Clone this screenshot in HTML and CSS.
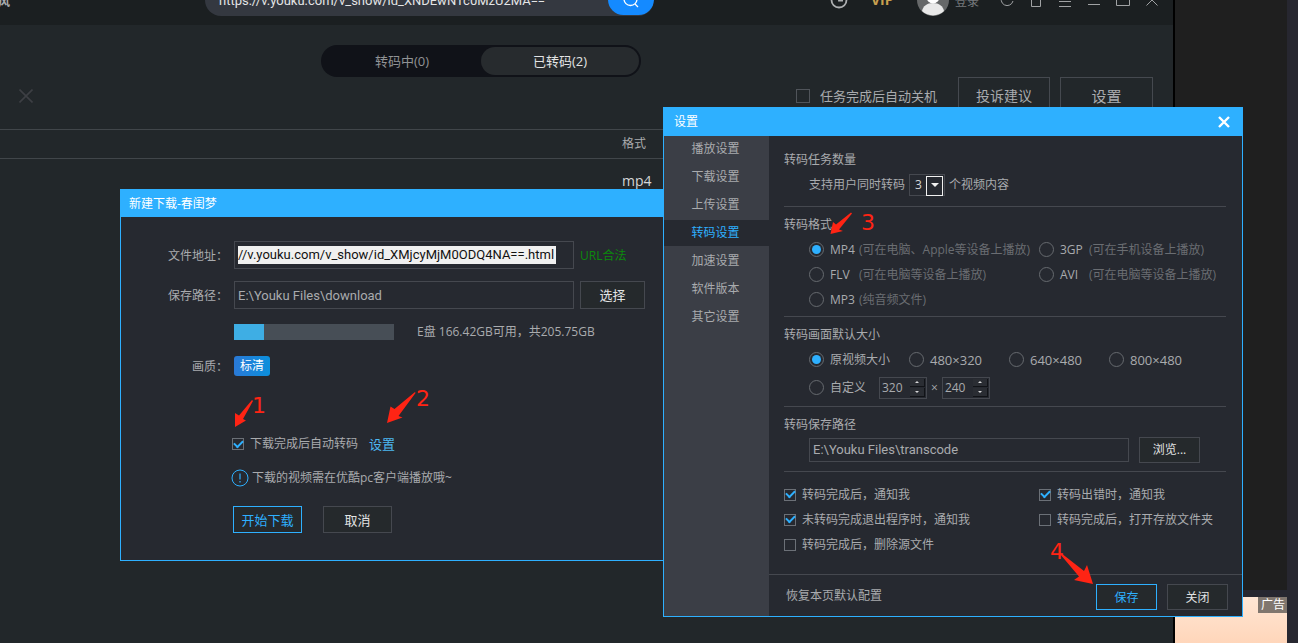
FILE: index.html
```html
<!DOCTYPE html>
<html lang="zh-CN">
<head>
<meta charset="utf-8">
<title>优酷</title>
<link rel="stylesheet" href="styles.css">
</head>
<body>
<div class="desktop">
  <main class="app">
    <header class="topbar">
      <span class="topbar-word">飓风</span>
      <form class="search">
        <input class="search-input" type="text" aria-label="搜索" value="https://v.youku.com/v_show/id_XNDEwNTc0MzU2MA==">
        <button class="search-button" type="button" aria-label="搜索">
          <svg width="18" height="18" viewBox="0 0 18 18" fill="none" stroke="#fff" stroke-width="1.3"><circle cx="8.500" cy="8" r="6.500"/><path d="M13 13l3 3"/></svg>
        </button>
      </form>
      <div class="account">
        <svg class="history" width="18" height="18" viewBox="0 0 18 18" fill="none" stroke="#aeb0b2" stroke-width="1.800"><circle cx="9" cy="9" r="7.500"/><path d="M9 4v5.500h4" /></svg>
        <span class="vip">VIP</span>
        <svg class="avatar" width="32" height="32" viewBox="0 0 32 32"><circle cx="16" cy="16" r="16" fill="#666869"/><circle cx="16" cy="13" r="6.500" fill="#fff"/><path d="M5 27c1-5 5-8 11-8s10 3 11 8a16 16 0 0 1-22 0z" fill="#e9e9e9"/></svg>
        <span class="login">登录</span>
      </div>
      <div class="window-tools">
        <svg width="14" height="14" viewBox="0 0 14 14"><path d="M12 3a6 6 0 1 0 1 5M12.500 0v4H9"/></svg>
        <svg width="14" height="14" viewBox="0 0 14 14"><path d="M2.500 5v8.500h9V5M.5 5V1h13v4z"/></svg>
        <svg width="14" height="14" viewBox="0 0 14 14"><path d="M1 3.500h12M1 8.500h12M1 13.500h12"/></svg>
        <svg width="14" height="14" viewBox="0 0 14 14"><path d="M1 11.500h12"/></svg>
        <svg width="14" height="14" viewBox="0 0 14 14"><path d="M.5 1.500h13v11H.5z"/></svg>
        <svg width="14" height="14" viewBox="0 0 14 14"><path d="M1.500 1.500l11 11M12.500 1.500l-11 11"/></svg>
      </div>
    </header>
    <nav class="tabs">
      <button class="tab" type="button">转码中(0)</button>
      <button class="tab tab-active" type="button">已转码(2)</button>
    </nav>
    <div class="toolbar">
      <button class="remove" type="button" aria-label="删除">
        <svg width="14" height="14" viewBox="0 0 14 14" stroke="#3d3f44" stroke-width="1.600"><path d="M.5.5l13 13M13.500.5l-13 13"/></svg>
      </button>
      <label class="shutdown"><input class="box box-large" type="checkbox">任务完成后自动关机</label>
      <button class="tool-button" type="button">投诉建议</button>
      <button class="tool-button tool-settings" type="button">设置</button>
    </div>
    <table class="files">
      <thead><tr><th class="file-name"></th><th>格式</th></tr></thead>
      <tbody><tr><td class="file-name"></td><td>mp4</td></tr></tbody>
    </table>
  </main>
  <aside class="page-side">
    <div class="side-panel"></div>
    <div class="ad"><span class="ad-tag">广告</span></div>
  </aside>

  <section class="dialog download">
    <h2 class="dialog-title download-title">新建下载-春闺梦</h2>
    <form class="download-form">
      <div class="field">
        <label class="field-label" for="url">文件地址：</label>
        <div class="frame field-box"><input class="url-input" id="url" type="text" value="//v.youku.com/v_show/id_XMjcyMjM0ODQ4NA==.html"></div>
        <span class="url-ok">URL合法</span>
      </div>
      <div class="field">
        <label class="field-label" for="path">保存路径：</label>
        <input class="frame field-box path-input" id="path" type="text" value="E:\Youku Files\download">
        <button class="button choose" type="button">选择</button>
      </div>
      <div class="field disk">
        <span class="disk-bar"><span class="disk-used"></span></span>
        <span>E盘 166.42GB可用，共205.75GB</span>
      </div>
      <div class="field quality">
        <span class="field-label">画质：</span>
        <button class="badge" type="button">标清</button>
      </div>
      <div class="auto">
        <label class="check"><input class="box" type="checkbox" checked>下载完成后自动转码</label>
        <a class="auto-link" href="#settings">设置</a>
      </div>
      <p class="notice">
        <svg width="18" height="18" viewBox="0 0 18 18" fill="none" stroke="#2eb0ff"><circle cx="9" cy="9" r="8"/><path d="M9 4.500v6M9 12v1.500" stroke-width="1.200"/></svg>
        下载的视频需在优酷pc客户端播放哦~
      </p>
      <div class="download-actions">
        <button class="button primary" type="button">开始下载</button>
        <button class="button" type="button">取消</button>
      </div>
    </form>
  </section>

  <section class="dialog settings" id="settings">
    <header class="dialog-title settings-title">
      <h2 class="settings-name">设置</h2>
      <button class="close" type="button" aria-label="关闭">
        <svg width="12" height="12" viewBox="0 0 12 12" stroke="#fff" stroke-width="2.400"><path d="M1 1l10 10M11 1L1 11"/></svg>
      </button>
    </header>
    <div class="settings-body">
      <nav class="menu">
        <button class="menu-item" type="button">播放设置</button>
        <button class="menu-item" type="button">下载设置</button>
        <button class="menu-item" type="button">上传设置</button>
        <button class="menu-item menu-active" type="button">转码设置</button>
        <button class="menu-item" type="button">加速设置</button>
        <button class="menu-item" type="button">软件版本</button>
        <button class="menu-item" type="button">其它设置</button>
      </nav>
      <form class="panel">
        <section class="group group-first">
          <h3 class="group-title">转码任务数量</h3>
          <div class="row indent count">
            <label for="count">支持用户同时转码</label>
            <span class="select"><select class="select-box" id="count"><option>3</option></select></span>
            <span>个视频内容</span>
          </div>
        </section>
        <section class="group">
          <h3 class="group-title">转码格式</h3>
          <div class="formats indent">
            <label class="choice"><input class="radio" type="radio" name="format" checked><span class="format">MP4</span><span class="hint">(可在电脑、Apple等设备上播放)</span></label>
            <label class="choice"><input class="radio" type="radio" name="format"><span class="format">3GP</span><span class="hint">(可在手机设备上播放)</span></label>
            <label class="choice"><input class="radio" type="radio" name="format"><span class="format">FLV</span><span class="hint">(可在电脑等设备上播放)</span></label>
            <label class="choice"><input class="radio" type="radio" name="format"><span class="format">AVI</span><span class="hint">(可在电脑等设备上播放)</span></label>
            <label class="choice"><input class="radio" type="radio" name="format"><span class="format">MP3</span><span class="hint">(纯音频文件)</span></label>
          </div>
        </section>
        <section class="group group-size">
          <h3 class="group-title">转码画面默认大小</h3>
          <div class="sizes indent">
            <label class="choice"><input class="radio" type="radio" name="size" checked>原视频大小</label>
            <label class="choice latin"><input class="radio" type="radio" name="size">480×320</label>
            <label class="choice latin"><input class="radio" type="radio" name="size">640×480</label>
            <label class="choice latin"><input class="radio" type="radio" name="size">800×480</label>
          </div>
          <div class="row indent custom">
            <label class="choice custom-choice"><input class="radio" type="radio" name="size">自定义</label>
            <span class="frame spinner">
              <input class="spinner-input" type="text" aria-label="宽" value="320">
              <span class="spinner-keys"><button class="key key-up" type="button" aria-label="增加宽"></button><button class="key key-down" type="button" aria-label="减少宽"></button></span>
            </span>
            <span>×</span>
            <span class="frame spinner">
              <input class="spinner-input" type="text" aria-label="高" value="240">
              <span class="spinner-keys"><button class="key key-up" type="button" aria-label="增加高"></button><button class="key key-down" type="button" aria-label="减少高"></button></span>
            </span>
          </div>
        </section>
        <section class="group group-path">
          <label class="group-title" for="transcode">转码保存路径</label>
          <div class="row indent save">
            <input class="frame save-input" id="transcode" type="text" value="E:\Youku Files\transcode">
            <button class="button small" type="button">浏览...</button>
          </div>
        </section>
        <div class="checks">
          <label class="check"><input class="box" type="checkbox" checked>转码完成后，通知我</label>
          <label class="check"><input class="box" type="checkbox" checked>转码出错时，通知我</label>
          <label class="check"><input class="box" type="checkbox" checked>未转码完成退出程序时，通知我</label>
          <label class="check"><input class="box" type="checkbox">转码完成后，打开存放文件夹</label>
          <label class="check"><input class="box" type="checkbox">转码完成后，删除源文件</label>
        </div>
        <footer class="panel-footer">
          <a class="restore" href="#settings">恢复本页默认配置</a>
          <button class="button small primary" type="button">保存</button>
          <button class="button small" type="button">关闭</button>
        </footer>
      </form>
    </div>
  </section>

  <div class="step step-1"><svg width="20" height="30" viewBox="0 0 20 30"><path d="M1 29L1 15L5 17.500L18 2L19 3L9 21L12 22.500z"/></svg><span class="step-number">1</span></div>
  <div class="step step-2"><svg width="30" height="32" viewBox="0 0 30 32"><path d="M1 32L4.500 15.500L8.500 18L29 1L29.500 2L12.500 25L16.500 26.500z"/></svg><span class="step-number">2</span></div>
  <div class="step step-3"><svg width="22" height="22" viewBox="0 0 22 22"><path d="M.5 22L3 10L6 12.500L21 .5L22 1.500L9 17.500L13 19z"/></svg><span class="step-number">3</span></div>
  <div class="step step-4"><svg width="34" height="32" viewBox="0 0 34 32"><path d="M34 32L15 28L20 24.500L1 2L2 1L25 19L28 13z"/></svg><span class="step-number">4</span></div>
</div>
</body>
</html>
```

FILE: styles.css
```css
* { box-sizing: border-box; }

body {
  margin: 0;
  overflow: hidden;
  background: #272730;
  color: #a9abae;
  font: 12px/20px "Open Sans", "Noto Sans CJK SC", sans-serif;
}

h2, h3, p { margin: 0; font-size: 12px; font-weight: 400; }
svg { display: block; flex: none; }
form { margin: 0; }

button, input, select {
  margin: 0;
  padding: 0;
  border: 0;
  border-radius: 0;
  background: none;
  color: inherit;
  font: inherit;
}

.desktop {
  position: relative;
  display: grid;
  grid-template-columns: 1fr 112px;
  padding-right: 11px;
  height: 100vh;
  overflow: hidden;
}

/* Client window */
.app {
  min-width: 0;
  overflow: hidden;
  background: #22272a;
  border-right: 2px solid #000;
}

.topbar {
  display: flex;
  align-items: center;
  height: 50px;
  margin-top: -25px;
  background: #1b1f21;
}

.topbar-word { width: 205px; margin-left: -14px; padding-top: 4px; font-weight: 700; line-height: 24px; }

.search {
  display: flex;
  width: 449px;
  height: 32px;
  margin-left: 14px;
  border-radius: 16px;
  background: #343840;
  overflow: hidden;
}

.search-input { flex: 1; min-width: 0; padding: 2px 0 0 14px; color: #e4e5e6; font: 13px/20px Roboto, sans-serif; }

.search-button {
  display: grid;
  place-items: center;
  width: 46px;
  height: 31px;
  border-radius: 16px;
  background: #148aff;
}

.account { display: flex; align-items: center; margin-left: 176px; color: #777a7d; }
.vip { width: 46px; padding-left: 23px; box-sizing: content-box; color: #c9a04f; font-size: 14px; font-weight: 700; }
.login { margin-left: 6px; padding-top: 4px; }

.window-tools {
  display: flex;
  gap: 15px;
  margin: 0 14px 0 auto;
  fill: none;
  stroke: #a0a2a4;
}

.tabs {
  display: flex;
  width: 320px;
  height: 32px;
  margin: 20px 0 0 321px;
  padding: 2px;
  border-radius: 16px;
  background: #101218;
}

.tab { flex: 1; border-radius: 14px; color: #909295; font-size: 13px; }
.tab-active { background: #272b2e; color: #e2e3e4; }

.toolbar {
  display: flex;
  align-items: center;
  height: 52px;
  padding: 0 20px 14px 19px;
}

.remove { margin-right: auto; }
.shutdown { display: flex; align-items: center; gap: 10px; margin-right: 21px; font-size: 13px; }
.tool-button { width: 92px; height: 38px; border: 1px solid #45494f; font-size: 14px; }
.tool-settings { width: 93px; margin-left: 10px; font-size: 15px; }

.files { width: 100%; border-collapse: collapse; text-align: left; }
.files th { height: 29px; padding: 0; border: solid #41464a; border-width: 1px 0; font-weight: 400; }
.files td { height: 44px; padding: 0; color: #d5d6d7; font-size: 14px; }
.files .file-name { width: 622px; }

/* Page beside the client */
.page-side { display: flex; flex-direction: column; gap: 7px; }
.side-panel { height: 590px; flex: none; background: #1f1f1f; }
.ad { display: flex; flex: 1; justify-content: flex-end; align-items: flex-start; background: linear-gradient(#ffe6d4, #ffd6ba); }
.ad-tag { padding: 0 2px 0 3px; background: #80766e; color: #fff; line-height: 16px; }

/* Shared controls */
.frame { border: 1px solid #45484f; }

.box {
  appearance: none;
  display: grid;
  place-items: center;
  flex: none;
  width: 12px;
  height: 12px;
  border: 1px solid #6b7077;
}

.box-large { width: 14px; height: 14px; border-color: #50545a; }

.box:checked::before {
  content: "";
  width: 7px;
  height: 4px;
  margin-top: -3px;
  border: solid #2eb0ff;
  border-width: 0 0 2px 2px;
  transform: rotate(-45deg);
}

.check { display: flex; align-items: center; gap: 6px; }

.button {
  width: 69px;
  height: 27px;
  border: 1px solid #45484f;
  background: #25292c;
  color: #e2e3e4;
  font-size: 13px;
}

.small { width: 61px; height: 26px; padding-top: 1px; font-size: 12px; }
.primary { border-color: #2eb0ff; color: #2eb0ff; }

.dialog { position: absolute; border: 1px solid #2eb0ff; background: #262930; }
.dialog-title { background: #2eb0ff; color: #fff; }

/* New download dialog */
.download { left: 120px; top: 189px; width: 600px; }
.download-title { padding-left: 8px; line-height: 27px; }
.download-form { padding: 24px 0 27px; }
.field { display: flex; align-items: center; gap: 6px; margin-bottom: 12px; }
.field-label { width: 107px; padding-top: 2px; line-height: 18px; text-align: right; }
.field-box { width: 340px; height: 28px; padding: 0 3px; font: 13px/20px Roboto, sans-serif; }
.frame.field-box { display: flex; align-items: center; }
.url-input { width: 318px; height: 18px; background: #f0f0f0; color: #111; }
.url-ok { padding-top: 2px; color: #0c8a0c; line-height: 18px; }
.choose { width: 65px; height: 28px; }

.disk { gap: 23px; height: 16px; margin: 15px 0 16px 113px; }
.disk-bar { width: 160px; height: 16px; background: #474e56; }
.disk-used { display: block; width: 30px; height: 16px; background: #3eaee4; }

.quality { margin-bottom: 58px; }
.badge { width: 36px; height: 20px; border-radius: 3px; background: linear-gradient(90deg, #2a79d6, #0b8fdc); color: #fff; line-height: 18px; }

.auto { display: flex; gap: 11px; margin: 0 0 14px 111px; }
.auto-link { color: #4db8f0; font-size: 13px; text-decoration: none; }
.notice { display: flex; align-items: center; gap: 3px; margin: 0 0 18px 110px; }
.download-actions { display: flex; gap: 21px; margin-left: 112px; }

/* Settings dialog */
.settings { left: 663px; top: 107px; width: 580px; }
.settings-title { display: flex; justify-content: space-between; align-items: center; height: 28px; padding: 0 12px 0 10px; }
.close { display: grid; place-items: center; }
.settings-body { display: grid; grid-template-columns: 105px 1fr; }

.menu { display: flex; flex-direction: column; gap: 2px; background: #3b3e46; }
.menu-item { height: 26px; padding-right: 2px; }
.menu-active { background: #262930; color: #2eb0ff; }

.panel { min-width: 0; }
.group { margin: 0 16px 0 15px; padding: 8px 0 4px; border-bottom: 1px solid #45484f; }
.group-first { padding: 14px 0 9px; }
.group-size { padding-bottom: 6px; }
.group-path { padding-bottom: 9px; }
.group-title { display: block; margin-bottom: 2px; line-height: 20px; }
.row { display: flex; align-items: center; height: 25px; }
.indent { margin-left: 25px; }
.count { gap: 4px; }

.select { position: relative; display: flex; width: 36px; height: 22px; border: 1px solid #45484f; }
.select-box { appearance: none; width: 100%; padding-left: 5px; color: #d5d6d7; }
.select::before {
  content: "";
  position: absolute;
  top: 1px;
  right: 1px;
  width: 15px;
  height: 18px;
  border: 1px solid #f0f0f0;
  pointer-events: none;
}
.select::after {
  content: "";
  position: absolute;
  top: 8px;
  right: 5px;
  border: 4px solid transparent;
  border-top-color: #f0f0f0;
  border-bottom: 0;
  pointer-events: none;
}

.formats { display: grid; grid-template-columns: 230px 1fr; grid-auto-rows: 25px; }
.sizes { display: grid; grid-template-columns: repeat(4, 100px); grid-auto-rows: 25px; }
.choice { display: flex; align-items: center; white-space: nowrap; }
.format { width: 29px; }
.hint { color: #6a6d72; }
.latin { font-size: 13px; }

.radio {
  appearance: none;
  display: grid;
  place-items: center;
  flex: none;
  width: 15px;
  height: 15px;
  margin-right: 6px;
  border: 1px solid #666a6f;
  border-radius: 50%;
}
.radio:checked::before { content: ""; width: 9px; height: 9px; border-radius: 50%; background: #2eb0ff; }

.custom { gap: 4px; margin-top: 3px; }
.custom-choice { width: 66px; }
.spinner { display: flex; width: 48px; height: 22px; }
.spinner-input { flex: 1; min-width: 0; padding-left: 2px; }
.spinner-keys { display: grid; gap: 1px; width: 17px; padding: 1px; }
.key { display: grid; place-items: center; border: solid #111317; border-width: 0 1px 1px 0; background: #2a2d33; }
.key::before { content: ""; border: 2px solid transparent; }
.key-up::before { border-bottom-color: #d5d6d7; border-top: 0; }
.key-down::before { border-top-color: #d5d6d7; border-bottom: 0; }

.save { gap: 10px; }
.save-input { width: 320px; height: 24px; padding-left: 3px; font: 13px/20px Roboto, sans-serif; }

.checks { display: grid; grid-template-columns: 255px 1fr; grid-auto-rows: 25px; padding: 10px 15px 17px; }

.panel-footer { display: flex; align-items: flex-start; gap: 10px; height: 42px; padding: 9px 14px 0 17px; border-top: 1px solid #45484f; }
.restore { margin-right: auto; color: inherit; line-height: 24px; text-decoration: none; }

/* Numbered callouts */
.step { position: absolute; fill: #ff2414; color: #ff2414; }
.step-number { position: absolute; font: 22px/22px "DejaVu Sans", sans-serif; }
.step-1 { left: 234px; top: 398px; }
.step-1 .step-number { left: 18px; top: -3px; }
.step-2 { left: 386px; top: 391px; }
.step-2 .step-number { left: 30px; top: -3px; }
.step-3 { left: 830px; top: 212px; }
.step-3 .step-number { left: 31px; top: 0; }
.step-4 { left: 1059px; top: 552px; }
.step-4 .step-number { left: -9px; top: -11px; }
```
